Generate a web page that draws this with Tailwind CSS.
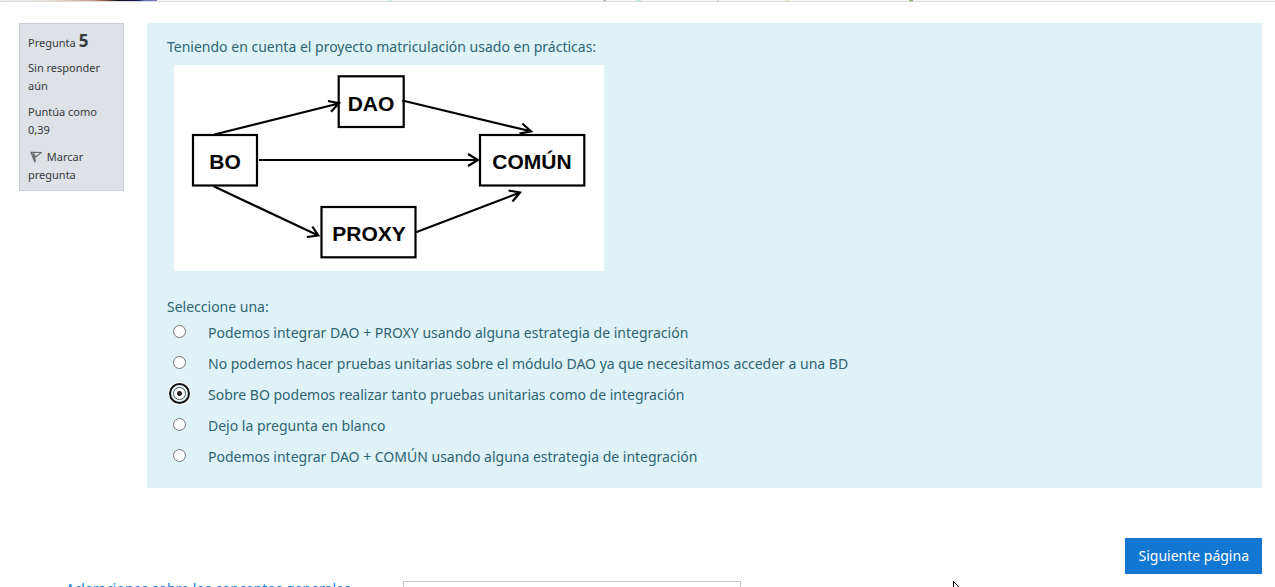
<!DOCTYPE html>
<html lang="es">
<head>
<meta charset="utf-8">
<title>Cuestionario - Pregunta 5</title>
<script src="https://cdn.jsdelivr.net/npm/@tailwindcss/browser@4"></script>
</head>
<body class="h-screen overflow-hidden bg-white font-['Noto_Sans',sans-serif] text-sm text-[#373a3c]">
<header class="h-[2px] border-b border-[#dcdcdc] bg-[#f7f7f5]">
  <svg class="block h-px w-full" aria-hidden="true">
    <defs><linearGradient id="banner"><stop offset="0" stop-color="#f2f0ee"/><stop offset=".35" stop-color="#ecdfd4"/><stop offset=".6" stop-color="#bd9680"/><stop offset=".68" stop-color="#84503b"/><stop offset=".75" stop-color="#15151f"/><stop offset=".88" stop-color="#17125a"/><stop offset=".92" stop-color="#5878bd"/><stop offset="1" stop-color="#7777b8"/></linearGradient></defs>
    <rect width="157" height="1" fill="url(#banner)"/>
    <rect x="388" width="4" height="1" fill="#cdeff0"/><rect x="603" width="3" height="1" fill="#b5b7a5"/><rect x="636" width="5" height="1" fill="#b9eadb"/><rect x="717" width="2" height="1" fill="#cdd5cd"/><rect x="785" width="4" height="1" fill="#ece8c5"/><rect x="909" width="4" height="1" fill="#80b25d"/>
  </svg>
</header>

<main class="pt-[21px] pr-[13px] pl-[19px]">
  <form>
    <div class="flex items-start gap-[23px]">
      <aside class="w-[105px] shrink-0 border border-[#c8ccd8] bg-[#dee1e6] px-2 pt-2 pb-[6px] text-[11px] leading-[18px]">
        <h3 class="mb-[7px] flex items-baseline gap-[3px]">Pregunta <span class="text-[17px] font-bold">5</span></h3>
        <p class="mb-2">Sin responder aún</p>
        <p class="mb-[9px]">Puntúa como 0,39</p>
        <a href="#" class="block">
          <svg class="mr-[2px] ml-[2px] inline-block h-3 w-3 align-[-2px]" viewBox="0 0 12 12" fill="none" stroke="#6b6e70" aria-hidden="true"><path d="M1 1l4 10.500M3 1.500l2.500 9" stroke-width="1.300"/><path d="M.500 1.300l11 .200-6.500 5M3 2l2.500 3.500" stroke-width="1.200"/></svg>
          Marcar pregunta</a>
      </aside>

      <section class="min-w-0 flex-1 bg-[#def2f8] px-5 pt-3 pb-[19px] text-[#2f6473]">
        <p class="leading-6">Teniendo en cuenta el proyecto matriculación usado en prácticas:</p>
        <svg class="mt-[6px] ml-[7px] block h-[206px] w-[430px] bg-white" viewBox="0 0 430 206" role="img" aria-label="Dependencias entre BO, DAO, PROXY y COMÚN">
          <g fill="none" stroke="#000" stroke-width="2.200">
            <rect x="19" y="70" width="64" height="50.500"/>
            <rect x="164.700" y="11.300" width="65" height="50.700"/>
            <rect x="306" y="70" width="104.300" height="50.500"/>
            <rect x="147.500" y="142" width="94" height="50.300"/>
            <path d="M40.300 69.500L164.700 38.500M154 36l11 2.200-8 8.500"/>
            <path d="M228.300 35.500L357 66.300M348.300 58.500l8.700 7.800-11.500 2.400"/>
            <path d="M85 95H304M294 89l10 6-10 6"/>
            <path d="M39.700 121.300L144.300 170.500M138.300 161.500l6 9-11.500 1.500"/>
            <path d="M242 167.300L346 127.500M334.500 125.500l11.500 2-7.500 9"/>
          </g>
          <g class="font-['Liberation_Sans',sans-serif] text-[21px] font-bold" text-anchor="middle">
            <text x="51" y="104">BO</text><text x="197" y="46">DAO</text><text x="358" y="104">COMÚN</text><text x="195" y="176">PROXY</text>
          </g>
        </svg>
        <fieldset class="mt-6">
          <legend class="leading-6">Seleccione una:</legend>
          <div class="flex flex-col gap-[7px] pt-[2px] pl-[6px] leading-6">
            <div class="flex gap-[22px]"><input type="radio" name="respuesta" id="r0" class="mt-[4px] h-[13px] w-[13px] shrink-0 appearance-none rounded-full border border-[#767676] bg-white"><label for="r0">Podemos integrar DAO + PROXY usando alguna estrategia de integración</label></div>
            <div class="flex gap-[22px]"><input type="radio" name="respuesta" id="r1" class="mt-[4px] h-[13px] w-[13px] shrink-0 appearance-none rounded-full border border-[#767676] bg-white"><label for="r1">No podemos hacer pruebas unitarias sobre el módulo DAO ya que necesitamos acceder a una BD</label></div>
            <div class="flex gap-[22px]"><input type="radio" name="respuesta" id="r2" checked class="mt-[4px] h-[13px] w-[13px] shrink-0 appearance-none rounded-full border border-[#555] bg-white bg-[radial-gradient(circle,#222_2px,transparent_3px)] outline-2 outline-offset-2 outline-[#101010] shadow-[0_0_0_2px_#def2f8,0_0_0_5px_#fff]"><label for="r2">Sobre BO podemos realizar tanto pruebas unitarias como de integración</label></div>
            <div class="flex gap-[22px]"><input type="radio" name="respuesta" id="r3" class="mt-[4px] h-[13px] w-[13px] shrink-0 appearance-none rounded-full border border-[#767676] bg-white"><label for="r3">Dejo la pregunta en blanco</label></div>
            <div class="flex gap-[22px]"><input type="radio" name="respuesta" id="r4" class="mt-[4px] h-[13px] w-[13px] shrink-0 appearance-none rounded-full border border-[#767676] bg-white"><label for="r4">Podemos integrar DAO + COMÚN usando alguna estrategia de integración</label></div>
          </div>
        </fieldset>
      </section>
    </div>
    <div class="mt-[50px] flex justify-end">
      <button type="submit" class="h-9 bg-[#1177d1] px-[13px] text-white">Siguiente página</button>
    </div>
  </form>
  <nav class="mt-[7px] flex items-start">
    <a href="#" class="w-[384px] shrink-0 pl-9 leading-4 text-[#1177d1]">◂ Aclaraciones sobre los conceptos generales</a>
    <select aria-label="Ir a" class="h-9 w-[338px] appearance-none border border-[#c8cad3] bg-white px-3"><option>Ir a...</option></select>
  </nav>
</main>

<svg class="absolute top-[581px] left-[953px] h-[19px] w-3" viewBox="0 0 12 19" aria-hidden="true"><path d="M.500.500v16l4-4 2.500 6 2-1-2.500-5.500h5z" fill="#fff" stroke="#000"/></svg>
</body>
</html>
